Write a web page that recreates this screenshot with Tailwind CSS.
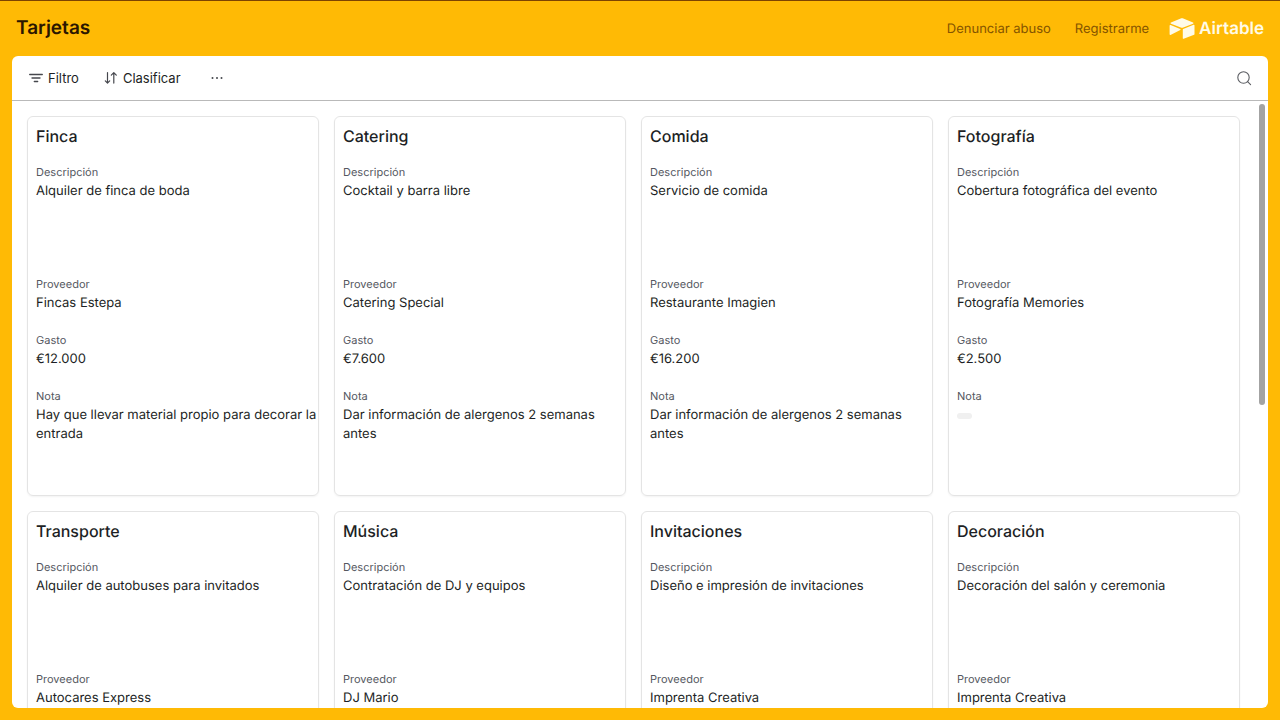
<!DOCTYPE html>
<html lang="es">
<head>
<meta charset="utf-8">
<meta name="viewport" content="width=device-width, initial-scale=1">
<title>Tarjetas</title>
<script src="https://cdn.jsdelivr.net/npm/@tailwindcss/browser@4"></script>
</head>
<body class="flex h-screen flex-col overflow-hidden border-t border-[#7d4300] bg-[#ffba05] font-['Inter',sans-serif] text-[#1d1f25] [text-rendering:geometricPrecision]">
<header class="flex h-[55px] shrink-0 items-center justify-between px-4">
  <h1 class="text-[19px] font-semibold text-[#2b1600]">Tarjetas</h1>
  <nav class="flex items-center pt-0.5 text-[13px] text-[#845400]">
    <a href="#" class="mr-6">Denunciar abuso</a>
    <a href="#" class="mr-5">Registrarme</a>
    <a href="#" class="flex items-center gap-1 text-[17px] font-semibold text-[#fffbe8]" aria-label="Airtable">
      <svg class="mb-0.5 h-[21px] w-[26px]" viewBox="0 0 26 21" fill="currentColor" aria-hidden="true">
        <path d="M11.7.5 2 4.5c-.6.2-.6 1 0 1.200l9.800 3.900c.8.300 1.700.3 2.500 0L24 5.700c.6-.2.600-1 0-1.200L14.300.500c-.8-.4-1.800-.4-2.600 0z"/>
        <path d="M13.800 11.600v8.600c0 .5.500.8.900.6l10.400-4.100c.3-.1.400-.3.400-.6V7.400c0-.5-.4-.7-.9-.6L14.200 11c-.2.100-.4.300-.4.600z"/>
        <path d="M11.300 12 1.500 16.900c-.4.200-.9-.1-.9-.6V7.600c0-.5.500-.8 1-.6l9.600 3.900c.5.200.5.900.1 1.100z"/>
      </svg>
      <span>Airtable</span>
    </a>
  </nav>
</header>
<main class="relative mx-3 mb-3 flex min-h-0 flex-1 flex-col overflow-hidden rounded-md bg-white">
  <div class="flex h-[45px] shrink-0 items-center border-b border-[#b9b9b9] px-4 text-[13px]">
    <button type="button" class="mr-6 flex items-center gap-1">
      <svg class="size-4" viewBox="0 0 16 16" fill="none" stroke="#45474d" stroke-width="1.300" stroke-linecap="round" aria-hidden="true"><path d="M1.700 4.500h12.600M4 8h8M6.300 11.500h3.400"/></svg>
      <span class="pt-0.5">Filtro</span>
    </button>
    <button type="button" class="mr-6 flex items-center gap-1">
      <svg class="size-4" viewBox="0 0 16 16" fill="none" stroke="#45474d" stroke-width="1.200" stroke-linecap="round" stroke-linejoin="round" aria-hidden="true"><path d="M4.500 2.500v10.500M2.300 10.900l2.200 2.200 2.200-2.200M10.800 13.100V2.600M8.300 5.100l2.500-2.500 2.500 2.500"/></svg>
      <span class="pt-0.5">Clasificar</span>
    </button>
    <button type="button" class="px-0.5" aria-label="Más opciones">
      <svg class="size-5" viewBox="0 0 20 20" fill="#45474d" aria-hidden="true"><circle cx="5.500" cy="10" r="1"/><circle cx="10" cy="10" r="1"/><circle cx="14.500" cy="10" r="1"/></svg>
    </button>
    <button type="button" class="ml-auto" aria-label="Buscar">
      <svg class="size-4" viewBox="0 0 16 16" fill="none" stroke="#5b5d62" stroke-width="1.100" stroke-linecap="round" aria-hidden="true"><circle cx="7.500" cy="7.500" r="5.700"/><path d="m11.600 11.600 3 3"/></svg>
    </button>
  </div>
  <div class="min-h-0 flex-1 overflow-x-hidden overflow-y-auto pt-[15px] pr-7 pb-4 pl-[15px] [scrollbar-width:none]">
    <div id="cards" class="grid grid-cols-4 gap-[15px]"></div>
  </div>
  <div class="absolute top-12 right-[3px] h-[301px] w-1.5 rounded-full bg-[#a3a3a3]"></div>
</main>
<script>
const cards = [
  ['Finca', 'Alquiler de finca de boda', 'Fincas Estepa', '€12.000', 'Hay que llevar material propio para decorar la entrada'],
  ['Catering', 'Cocktail y barra libre', 'Catering Special', '€7.600', 'Dar información de alergenos 2 semanas antes'],
  ['Comida', 'Servicio de comida', 'Restaurante Imagien', '€16.200', 'Dar información de alergenos 2 semanas antes'],
  ['Fotografía', 'Cobertura fotográfica del evento', 'Fotografía Memories', '€2.500', ''],
  ['Transporte', 'Alquiler de autobuses para invitados', 'Autocares Express'],
  ['Música', 'Contratación de DJ y equipos', 'DJ Mario'],
  ['Invitaciones', 'Diseño e impresión de invitaciones', 'Imprenta Creativa'],
  ['Decoración', 'Decoración del salón y ceremonia', 'Imprenta Creativa']
];
const field = (label, value, size) => value === undefined ? '' : `
  <div>
    <dt class="text-[11px] leading-4 text-[#55585f]">${label}</dt>
    <dd class="${size} pt-0.5 text-[13px] leading-[19px]">${value || '<span class="inline-block h-1.5 w-[15px] rounded-sm bg-[#f0f0f0]"></span>'}</dd>
  </div>`;
document.getElementById('cards').innerHTML = cards.map(([name, desc, prov, cost, note]) => `
  <article class="h-[380px] rounded-md border border-[#e4e4e4] pt-[7px] pl-2 shadow-xs">
    <h2 class="mb-4 text-base font-medium">${name}</h2>
    <dl class="flex flex-col gap-5">
      ${field('Descripción', desc, 'h-[76px]')}
      ${field('Proveedor', prov, 'h-5')}
      ${field('Gasto', cost, 'h-5')}
      ${field('Nota', note, 'h-[76px]')}
    </dl>
  </article>`).join('');
</script>
</body>
</html>
